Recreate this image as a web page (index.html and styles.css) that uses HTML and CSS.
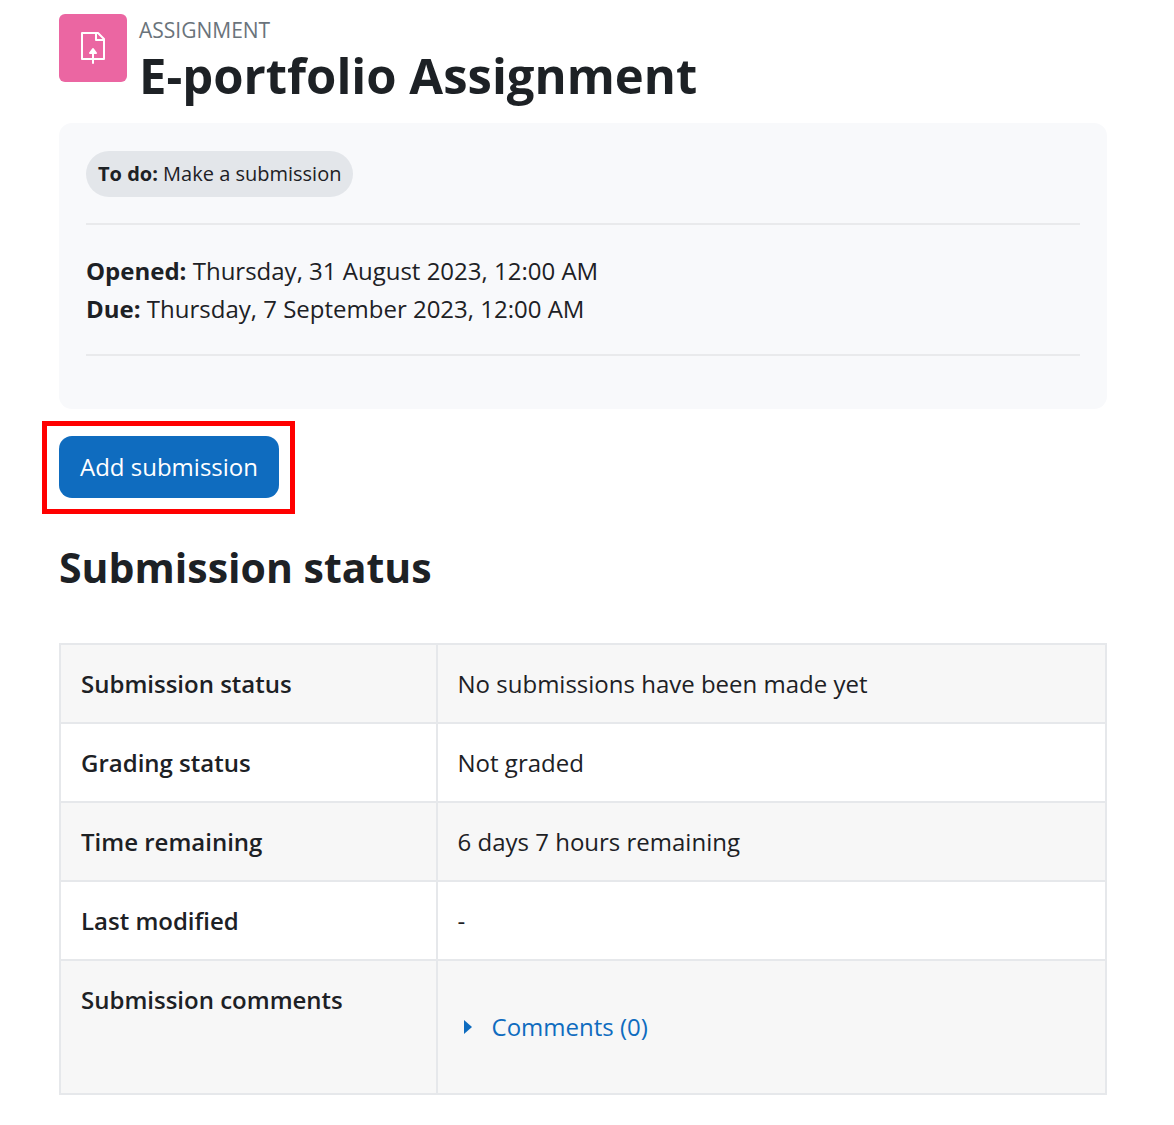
FILE: index.html
```html
<!DOCTYPE html>
<html lang="en">
<head>
  <meta charset="utf-8">
  <meta name="viewport" content="width=device-width, initial-scale=1">
  <title>E-portfolio Assignment</title>
  <link rel="stylesheet" href="styles.css">
</head>
<body>
  <main class="page">
    <header class="page-header">
      <div class="activity-icon">
        <svg viewBox="0 0 24 32" width="24" height="32" fill="none" stroke="#fff" stroke-width="2" stroke-linejoin="round" aria-hidden="true">
          <path d="M9 27H1V1h16l6 6v20h-8"/>
          <path d="M15 1v7h8"/>
          <path d="M1 27h22"/>
          <path d="M12 31V20" stroke-linecap="round"/>
          <path d="M12 17l3 4H9z" fill="#fff"/>
        </svg>
      </div>
      <div class="page-title">
        <div class="activity-type">Assignment</div>
        <h1>E-portfolio Assignment</h1>
      </div>
    </header>

    <section class="activity-info">
      <div class="badge"><strong>To do:</strong> Make a submission</div>
      <hr>
      <div class="dates">
        <div><strong>Opened:</strong> Thursday, 31 August 2023, 12:00 AM</div>
        <div><strong>Due:</strong> Thursday, 7 September 2023, 12:00 AM</div>
      </div>
      <hr>
    </section>

    <div class="highlight">
      <button type="button" class="btn-primary">Add submission</button>
    </div>

    <h2>Submission status</h2>

    <table class="status-table">
      <tbody>
        <tr>
          <th scope="row">Submission status</th>
          <td>No submissions have been made yet</td>
        </tr>
        <tr>
          <th scope="row">Grading status</th>
          <td>Not graded</td>
        </tr>
        <tr>
          <th scope="row">Time remaining</th>
          <td>6 days 7 hours remaining</td>
        </tr>
        <tr>
          <th scope="row">Last modified</th>
          <td>-</td>
        </tr>
        <tr>
          <th scope="row">Submission comments</th>
          <td class="comments-cell">
            <a href="#" class="comments-link">
              <svg viewBox="0 0 8 14" width="8" height="14" aria-hidden="true"><path d="M0 0l8 7-8 7z" fill="#0f6cbf"/></svg>
              <span>Comments (0)</span>
            </a>
          </td>
        </tr>
      </tbody>
    </table>
  </main>
</body>
</html>
```

FILE: styles.css
```css
* {
  box-sizing: border-box;
}

body {
  margin: 0;
  background-color: #fff;
  color: #1d2125;
  font-family: "Segoe UI", "Open Sans", "Noto Sans", sans-serif;
  font-size: 24px;
  line-height: 38px;
}

.page {
  padding: 14px 67px 30px 59px;
}

h1,
h2 {
  margin: 0;
  font-weight: 700;
}

/* Header */
.page-header {
  display: flex;
  align-items: flex-start;
  gap: 12px;
}

.activity-icon {
  display: flex;
  align-items: center;
  justify-content: center;
  flex: none;
  width: 68px;
  height: 68px;
  border-radius: 6px;
  background-color: #eb66a2;
}

.activity-type {
  color: #6a737b;
  font-size: 21px;
  line-height: 32px;
  text-transform: uppercase;
}

h1 {
  font-size: 49px;
  line-height: 58px;
}

/* Dates and completion box */
.activity-info {
  margin-top: 19px;
  padding: 28px 27px 27px;
  border-radius: 13px;
  background-color: #f8f9fb;
}

.activity-info hr {
  height: 2px;
  margin: 26px 0;
  border: 0;
  background-color: #e9eaec;
}

.badge {
  display: table;
  padding: 7px 12px;
  border-radius: 23px;
  background-color: #e3e6ea;
  font-size: 20px;
  line-height: 32px;
}

.dates {
  padding-top: 1px;
}

/* Submission button */
.highlight {
  display: table;
  margin: 12px 0 0 -17px;
  padding: 10px 11px 11px 12px;
  border: 5px solid #f00;
}

.btn-primary {
  display: block;
  padding: 12px 21px;
  border: 0;
  border-radius: 13px;
  background-color: #0f6cbf;
  color: #fff;
  font: inherit;
  cursor: pointer;
}

h2 {
  margin: 23px 0 46px;
  font-size: 41px;
  line-height: 60px;
}

/* Status table */
.status-table {
  width: 100%;
  border-collapse: collapse;
  table-layout: fixed;
}

.status-table th,
.status-table td {
  padding: 20px 20px 19px;
  border: 2px solid #e6e8eb;
  text-align: left;
  vertical-align: top;
}

.status-table th {
  width: 36%;
  font-weight: 600;
}

.status-table tr:nth-child(odd) {
  background-color: #f7f7f7;
}

.status-table .comments-cell {
  padding: 47px 26px;
}

.comments-link {
  display: flex;
  align-items: center;
  gap: 20px;
  color: #0f6cbf;
  text-decoration: none;
}
```
